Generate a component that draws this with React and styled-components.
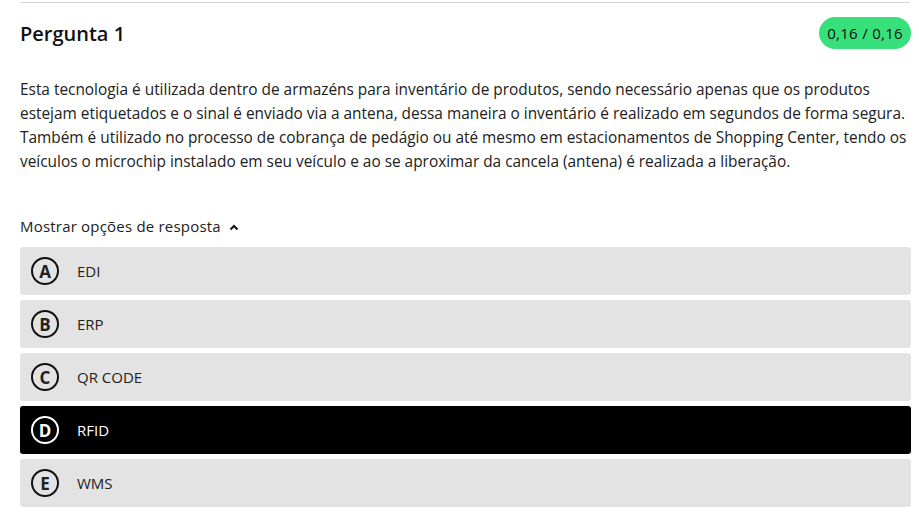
import styled, { createGlobalStyle } from 'styled-components';

const Global = createGlobalStyle`
  body{
    margin:0;
    background:#fff;
    font-family:"Open Sans", "Noto Sans", sans-serif;
    color:#212121;
  }
`;

const Wrapper = styled.div`
  padding: 2px 8px 0 20px;
`;

const Divider = styled.div`
  height: 1px;
  background: #d4d4d4;
  margin-right: 1px;
`;

const Header = styled.div`
  display: flex;
  align-items: center;
  justify-content: space-between;
  padding-top: 14px;
  height: 32px;
`;

const Title = styled.h2`
  margin: 0;
  font-size: 20px;
  font-weight: 600;
  color: #111;
`;

const Score = styled.span`
  background: #37e07b;
  color: #111;
  font-size: 15px;
  letter-spacing: 0.3px;
  padding: 0 8px;
  height: 32px;
  line-height: 32px;
  border-radius: 16px;
`;

const Text = styled.p`
  margin: 29px 0 0;
  font-size: 15.4px;
  line-height: 24px;
  color: #212121;
  white-space: nowrap;
`;

const Toggle = styled.div`
  display: flex;
  align-items: center;
  gap: 8px;
  margin-top: 42px;
  font-size: 15px;
  letter-spacing: 0.2px;
  line-height: 20px;
  color: #212121;
  svg{ margin-top: 2px; }
`;

const List = styled.div`
  display: flex;
  flex-direction: column;
  gap: 5px;
  margin-top: 11px;
`;

const Option = styled.div`
  display: flex;
  align-items: center;
  gap: 18px;
  height: 48px;
  padding-left: 11px;
  border-radius: 3px;
  background: ${p => p.selected ? '#000' : '#e3e3e3'};
  color: ${p => p.selected ? '#fff' : '#212121'};
  font-size: 15px;
`;

const Letter = styled.span`
  width: 24px;
  height: 24px;
  border-radius: 50%;
  border: 2px solid ${p => p.selected ? '#fff' : '#111'};
  display: flex;
  align-items: center;
  justify-content: center;
  font-size: 17px;
  font-weight: 700;
  line-height: 1;
`;

const options = [
  { k: 'A', t: 'EDI' },
  { k: 'B', t: 'ERP' },
  { k: 'C', t: 'QR CODE' },
  { k: 'D', t: 'RFID', selected: true },
  { k: 'E', t: 'WMS' },
];

export default function App() {
  return (
    <Wrapper>
      <Global />
      <Divider />
      <Header>
        <Title>Pergunta 1</Title>
        <Score>0,16 / 0,16</Score>
      </Header>
      <Text>
        Esta tecnologia é utilizada dentro de armazéns para inventário de produtos, sendo necessário apenas que os produtos<br />
        estejam etiquetados e o sinal é enviado via a antena, dessa maneira o inventário é realizado em segundos de forma segura.<br />
        Também é utilizado no processo de cobrança de pedágio ou até mesmo em estacionamentos de Shopping Center, tendo os<br />
        veículos o microchip instalado em seu veículo e ao se aproximar da cancela (antena) é realizada a liberação.
      </Text>
      <Toggle>
        Mostrar opções de resposta
        <svg width="10" height="7" viewBox="0 0 10 7">
          <path d="M1.5 5.5 L5 2 L8.5 5.5" fill="none" stroke="#111" strokeWidth="2" />
        </svg>
      </Toggle>
      <List>
        {options.map(o => (
          <Option key={o.k} selected={o.selected}>
            <Letter selected={o.selected}>{o.k}</Letter>
            <span>{o.t}</span>
          </Option>
        ))}
      </List>
    </Wrapper>
  );
}
